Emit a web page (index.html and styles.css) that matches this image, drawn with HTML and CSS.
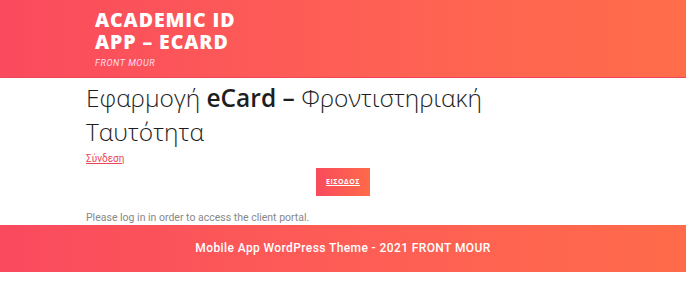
FILE: index.html
```html
<!DOCTYPE html>
<html lang="el">
<head>
<meta charset="utf-8">
<link rel="stylesheet" href="styles.css">
</head>
<body>
<header class="site-header">
  <div class="brand">
    <div class="brand-line">ACADEMIC ID</div>
    <div class="brand-line">APP – ECARD</div>
    <div class="brand-tag">FRONT MOUR</div>
  </div>
</header>
<main class="content">
  <h1 class="page-title">Εφαρμογή <b>eCard –</b> Φροντιστηριακή<br>Ταυτότητα</h1>
  <a class="login-link" href="#">Σύνδεση</a>
  <div class="btn-row"><a class="btn" href="#">ΕΙΣΟΔΟΣ</a></div>
  <p class="note">Please log in in order to access the client portal.</p>
</main>
<footer class="site-footer">Mobile App WordPress Theme - 2021 FRONT MOUR</footer>
</body>
</html>
```
FILE: styles.css
```css
html, body { margin: 0; padding: 0; background: #fff; }
body { font-family: "Open Sans", "Noto Sans", sans-serif; }
.site-header {
  height: 77px;
  background: linear-gradient(90deg, #fa4a5e 0%, #fe5f55 50%, #ff6d4a 100%);
  border-bottom: 1px solid #f04558;
  padding-left: 95px;
  box-sizing: content-box;
}
.brand { padding-top: 9px; }
.brand-line {
  color: #fff;
  font-family: "Open Sans", sans-serif;
  font-weight: 800;
  font-size: 19.5px;
  line-height: 22px;
  height: 22px;
  letter-spacing: 0.9px;
}
.brand-tag {
  color: #fde;
  font-family: "Roboto", sans-serif;
  font-style: italic;
  font-size: 9px;
  letter-spacing: 0.6px;
  margin-top: 5px;
}
.content { padding: 0 0 0 86px; }
.page-title {
  margin: 0;
  padding-top: 3px;
  font-family: "Open Sans", sans-serif;
  font-weight: 300;
  font-size: 24.5px;
  line-height: 34px;
  color: #1e1e1e;
}
.page-title b { font-weight: 600; }
.login-link {
  display: block;
  width: fit-content;
  margin-top: 4px;
  font-family: "Roboto", sans-serif;
  font-size: 10px;
  line-height: 12px;
  color: #e8475a;
}
.btn-row { display: flex; justify-content: center; padding-right: 86px; margin-top: 3px; }
.btn {
  display: block;
  width: 54px;
  height: 28px;
  line-height: 28px;
  text-align: center;
  background: linear-gradient(90deg, #f94a5c, #ff6a4a);
  color: #fff;
  font-family: "Open Sans", sans-serif;
  font-weight: 700;
  font-size: 7px;
  letter-spacing: 0.5px;
}
.note {
  margin: 16px 0 0;
  font-family: "Roboto", sans-serif;
  font-size: 10.5px;
  line-height: 12px;
  color: #888;
}
.site-footer {
  margin-top: 1px;
  height: 47px;
  line-height: 47px;
  text-align: center;
  background: linear-gradient(90deg, #f94a5e 0%, #fe5d56 50%, #ff6b4a 100%);
  color: #fff;
  font-family: "Roboto", sans-serif;
  font-weight: 500;
  font-size: 12px;
  letter-spacing: 0.4px;
}
```
